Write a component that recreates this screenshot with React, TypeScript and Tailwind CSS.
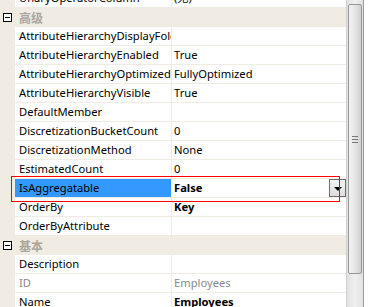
import { ReactNode } from "react";

type RowProps = {
    name: string
    value?: ReactNode
    bold?: boolean
    dim?: boolean
    selected?: boolean
    dropdown?: boolean
}

function Row({ name, value, bold, dim, selected, dropdown }: RowProps) {
    return (
        <div className="flex h-[19px] shrink-0">
            <div className="w-[15px] bg-[#f0ece3]" />
            <div className={`w-[156px] border-b border-[#f0ece3] pl-[4px] leading-[18px] whitespace-nowrap overflow-hidden ${selected ? "bg-[#3399ff]" : ""} ${dim ? "text-[#8a8a8a]" : "text-black"}`}>
                {name}
            </div>
            <div className="w-px bg-[#f0ece3]" />
            <div className={`flex-1 flex justify-between border-b border-[#f0ece3] pl-[2px] leading-[18px] whitespace-nowrap overflow-hidden ${bold ? "font-bold" : ""} ${dim ? "text-[#8a8a8a]" : "text-black"}`}>
                <span>{value}</span>
                {dropdown && (
                    <div className="w-[17px] h-[18px] border border-[#707070] bg-gradient-to-b from-[#f4f4f4] to-[#dcdcdc] flex items-center justify-center">
                        <div className="w-0 h-0 border-l-[4px] border-r-[4px] border-t-[4px] border-l-transparent border-r-transparent border-t-black mt-[1px]" />
                    </div>
                )}
            </div>
        </div>
    )
}

function Category({ label }: { label: string }) {
    return (
        <div className="flex h-[19px] shrink-0 bg-[#f0ece3] items-center">
            <div className="w-[15px] flex justify-center">
                <div className="w-[9px] h-[9px] border border-black bg-white flex items-center justify-center">
                    <div className="w-[5px] h-px bg-black" />
                </div>
            </div>
            <div className="pl-[4px] font-bold text-[12px] text-[#aaa7a0] font-['Noto_Sans_CJK_SC',sans-serif]">{label}</div>
        </div>
    )
}

export default function App() {
    return (
        <div className="w-[368px] h-[307px] overflow-hidden flex bg-white text-[11.2px] font-['Noto_Sans','Noto_Sans_CJK_SC',sans-serif]">
            <div className="w-[346px] relative border-l border-[#c8c4bc]">
                <div className="flex flex-col -mt-[11px] -ml-px">
                    <Row name="UnaryOperatorColumn" value="(无)" />
                    <Category label="高级" />
                    <Row name="AttributeHierarchyDisplayFolder" value="" />
                    <Row name="AttributeHierarchyEnabled" value="True" />
                    <Row name="AttributeHierarchyOptimizedState" value="FullyOptimized" />
                    <Row name="AttributeHierarchyVisible" value="True" />
                    <Row name="DefaultMember" value="" />
                    <Row name="DiscretizationBucketCount" value="0" />
                    <Row name="DiscretizationMethod" value="None" />
                    <Row name="EstimatedCount" value="0" />
                    <Row name="IsAggregatable" value="False" bold selected dropdown />
                    <Row name="OrderBy" value="Key" bold />
                    <Row name="OrderByAttribute" value="" />
                    <Category label="基本" />
                    <Row name="Description" value="" />
                    <Row name="ID" value="Employees" dim />
                    <Row name="Name" value="Employees" bold />
                </div>
                {/* annotation box */}
                <div className="absolute left-[10px] top-[176px] w-[329px] h-[26px] border border-[#ff0000] pointer-events-none" />
            </div>
            <div className="w-[17px] bg-gradient-to-r from-[#e2e2e2] via-[#f0f0f0] to-[#e2e2e2] border-l border-[#d0d0d0] pt-[4px] px-[1px]">
                <div className="h-[270px] rounded-[2px] border border-[#979797] bg-gradient-to-r from-[#f2f2f2] via-[#e6e6e6] to-[#cfcfcf] flex flex-col items-center justify-center gap-[2px]">
                    <div className="w-[6px] h-px bg-[#777]" />
                    <div className="w-[6px] h-px bg-[#777]" />
                    <div className="w-[6px] h-px bg-[#777]" />
                </div>
            </div>
            <div className="w-px bg-[#9a9a9a]" />
            <div className="flex-1 bg-white" />
        </div>
    )
}
